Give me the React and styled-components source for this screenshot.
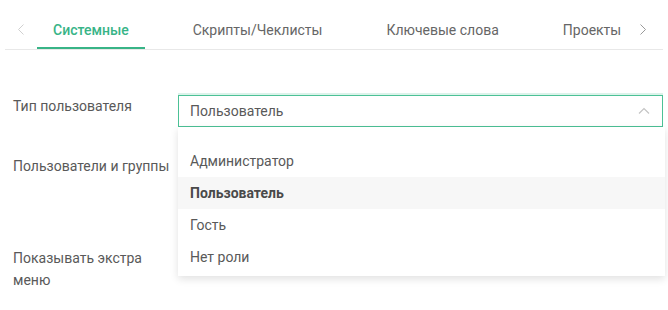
import React from "react";
import styled, { createGlobalStyle } from "styled-components";

const GlobalStyle = createGlobalStyle`
  body {
    margin: 0;
    background: #fff;
    font-family: Roboto, "Noto Sans", sans-serif;
    font-size: 14px;
    color: #595959;
  }
`;

const Page = styled.div`
  width: 658px;
  margin-left: 5px;
`;

const TabBar = styled.div`
  display: flex;
  align-items: stretch;
  height: 49px;
  border-bottom: 1px solid #e8e8e8;
`;

const Arrow = styled.div`
  width: ${(p) => p.w || 32}px;
  display: flex;
  align-items: center;
  justify-content: center;
  padding-top: 10px;
`;

const Tabs = styled.div`
  display: flex;
  gap: 32px;
`;

const Tab = styled.div`
  position: relative;
  padding: 19px 16px 0;
  line-height: 22px;
  white-space: nowrap;
  color: ${(p) => (p.active ? "#38b487" : "#666")};
  font-weight: ${(p) => (p.active ? 500 : 400)};
  &::after {
    content: "";
    position: absolute;
    left: 0;
    right: 0;
    bottom: 0;
    height: 2px;
    background: ${(p) => (p.active ? "#38b487" : "transparent")};
  }
`;

const Form = styled.div`
  padding: 45px 0 0 8px;
  display: flex;
  flex-direction: column;
  gap: 28px;
`;

const Row = styled.div`
  display: flex;
  min-height: ${(p) => p.minH || 0}px;
`;

const Label = styled.div`
  width: 165px;
  line-height: 22px;
  color: #595959;
`;

const SelectWrap = styled.div`
  position: relative;
  width: 485px;
`;

const SelectBox = styled.div`
  height: 30px;
  border: 1px solid #4cc196;
  box-shadow: 0 -2px 0 0 rgba(76, 193, 150, 0.2);
  display: flex;
  align-items: center;
  justify-content: space-between;
  padding: 0 12px 0 11px;
  color: #595959;
`;

const Menu = styled.div`
  position: absolute;
  top: 100%;
  left: 0;
  right: -2px;
  padding: 18px 0 3px;
  background: #fff;
  box-shadow: 0 3px 8px rgba(0, 0, 0, 0.12);
  z-index: 2;
`;

const Option = styled.div`
  height: 32px;
  line-height: 32px;
  padding: 0 12px;
  background: ${(p) => (p.selected ? "#f7f7f7" : "transparent")};
  font-weight: ${(p) => (p.selected ? 700 : 400)};
  color: ${(p) => (p.selected ? "#4a4a4a" : "#595959")};
`;

const ChevronUp = () => (
  <svg width="12" height="8" viewBox="0 0 12 8" fill="none">
    <path d="M1 6.5L6 1.5L11 6.5" stroke="#c4c4c4" strokeWidth="1.2" />
  </svg>
);

const SideArrow = ({ right }) => (
  <svg width="6" height="11" viewBox="0 0 6 11" fill="none">
    <path
      d={right ? "M0.5 0.5L5.5 5.5L0.5 10.5" : "M5.5 0.5L0.5 5.5L5.5 10.5"}
      stroke={right ? "#999" : "#d0d0d0"}
      strokeWidth="1"
    />
  </svg>
);

const tabs = ["Системные", "Скрипты/Чеклисты", "Ключевые слова", "Проекты"];
const options = ["Администратор", "Пользователь", "Гость", "Нет роли"];

export default function App() {
  return (
    <>
      <GlobalStyle />
      <Page>
        <TabBar>
          <Arrow>
            <SideArrow />
          </Arrow>
          <Tabs>
            {tabs.map((t, i) => (
              <Tab key={t} active={i === 0}>
                {t}
              </Tab>
            ))}
          </Tabs>
          <Arrow w={12}>
            <SideArrow right />
          </Arrow>
        </TabBar>
        <Form>
          <Row>
            <Label>Тип пользователя</Label>
            <SelectWrap>
              <SelectBox>
                Пользователь
                <ChevronUp />
              </SelectBox>
              <Menu>
                {options.map((o) => (
                  <Option key={o} selected={o === "Пользователь"}>
                    {o}
                  </Option>
                ))}
              </Menu>
            </SelectWrap>
          </Row>
          <Row minH={64}>
            <Label>Пользователи и группы</Label>
          </Row>
          <Row>
            <Label>Показывать экстра меню</Label>
          </Row>
        </Form>
      </Page>
    </>
  );
}
